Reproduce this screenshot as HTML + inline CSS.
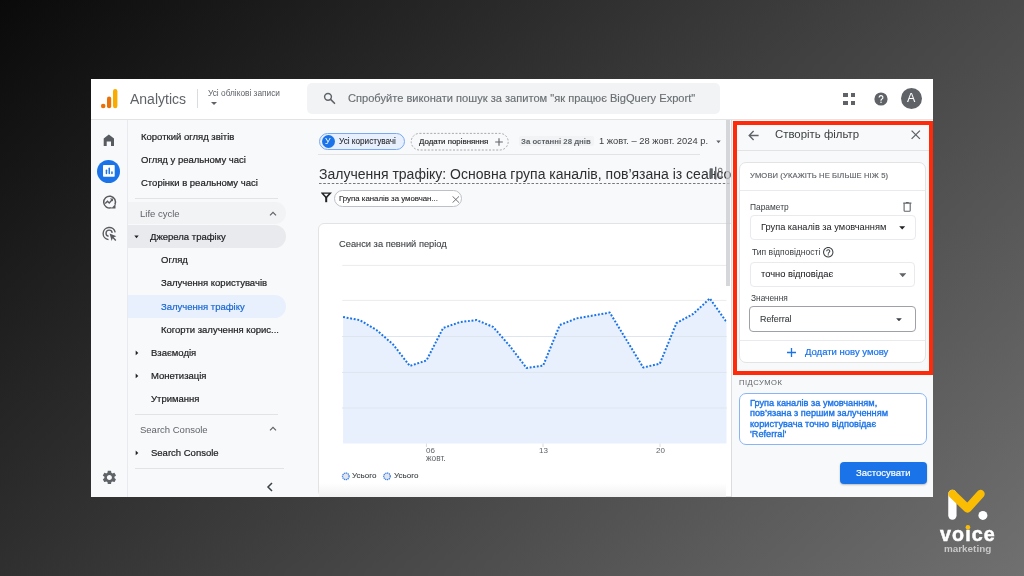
<!DOCTYPE html>
<html><head><meta charset="utf-8"><style>
html,body{margin:0;padding:0;width:1024px;height:576px;overflow:hidden}
body{background:linear-gradient(136.3deg,#0a0a0a 0%,#707070 100%);font-family:"Liberation Sans", sans-serif;position:relative}
.t{position:absolute;line-height:1;white-space:nowrap;will-change:transform}
.r{position:absolute}
</style></head><body>
<div class="r" style="left:91px;top:79px;width:842.00px;height:418.00px;background:#f8f9fa;overflow:hidden"></div>
<div class="r" style="left:91px;top:79px;width:842.00px;height:40.00px;background:#fff"></div>
<div class="r" style="left:91px;top:119px;width:842.00px;height:1.00px;background:#e3e3e3"></div>
<svg class="r" style="left:99px;top:87px" width="22" height="24" viewBox="0 0 22 24"><circle cx="4.2" cy="19" r="2.3" fill="#e8710a"/><rect x="8" y="9.5" width="4.2" height="11.8" rx="2.1" fill="#e8710a"/><rect x="14" y="2" width="4.4" height="19.3" rx="2.2" fill="#f9ab00"/></svg>
<div class="t" style="left:130.00px;top:92.15px;font-size:14px;color:#5f6368;font-weight:400;">Analytics</div>
<div class="r" style="left:197px;top:89px;width:1.00px;height:19.00px;background:#dadce0"></div>
<div class="t" style="left:208.00px;top:88.57px;font-size:8.3px;color:#5f6368;font-weight:400;">Усі облікові записи</div>
<svg class="r" style="left:210px;top:101px" width="8" height="5" viewBox="0 0 8 5"><path d="M1 1h6l-3 3z" fill="#5f6368"/></svg>
<div class="r" style="left:306.7px;top:83.3px;width:413.30px;height:30.70px;background:#f1f3f4;border-radius:5px"></div>
<svg class="r" style="left:318px;top:88px" width="24" height="20" viewBox="0 0 24 20"><circle cx="10" cy="8.8" r="3.4" stroke="#5f6368" stroke-width="1.45" fill="none"/><path d="M12.6 11.4l3.9 3.9" stroke="#5f6368" stroke-width="1.6" stroke-linecap="round"/></svg>
<div class="t" style="left:348.00px;top:92.60px;font-size:11.1px;color:#6a6e72;font-weight:400;-webkit-text-stroke:0.15px #6a6e72;">Спробуйте виконати пошук за запитом "як працює BigQuery Export"</div>
<div class="r" style="left:843.3px;top:93.2px;width:4.30px;height:4.20px;background:#5f6368"></div>
<div class="r" style="left:851px;top:93.2px;width:4.30px;height:4.20px;background:#5f6368"></div>
<div class="r" style="left:843.3px;top:100.5px;width:4.30px;height:4.20px;background:#5f6368"></div>
<div class="r" style="left:851px;top:100.5px;width:4.30px;height:4.20px;background:#5f6368"></div>
<svg class="r" style="left:873.5px;top:91.5px" width="14" height="14" viewBox="0 0 14 14"><circle cx="7" cy="7" r="6.6" fill="#5f6368"/><path d="M5.1 5.4a1.9 1.9 0 1 1 2.6 1.8c-.5.3-.7.6-.7 1.2v.3" stroke="#fff" stroke-width="1.2" fill="none"/><circle cx="7" cy="10.3" r=".75" fill="#fff"/></svg>
<div class="r" style="left:901px;top:88px;width:21.00px;height:21.00px;background:#5f6368;border-radius:50%"></div>
<div class="t" style="left:907.30px;top:92.02px;font-size:12.5px;color:#fff;font-weight:400;">A</div>
<div class="r" style="left:91px;top:120px;width:35.50px;height:377.00px;background:#f8f9fa"></div>
<div class="r" style="left:126.5px;top:120px;width:1.00px;height:377.00px;background:#e8eaed"></div>
<svg class="r" style="left:98px;top:128px" width="22" height="22" viewBox="98 128 22 22"><path d="M103.7 145.9V138.5L108.85 134.6L114 138.5V145.9H111V141.6H106.7V145.9Z" fill="#585b5f"/></svg>
<div class="r" style="left:97.1px;top:159.8px;width:23.10px;height:23.10px;background:#1a73e8;border-radius:50%"></div>
<svg class="r" style="left:103px;top:165px" width="12" height="12" viewBox="0 0 12 12"><rect x="0" y="0" width="11.7" height="11.7" rx="0.8" fill="#fff"/><rect x="2.7" y="4.6" width="1.5" height="4.6" rx="0.75" fill="#1a73e8"/><rect x="5.5" y="2.6" width="1.5" height="6.6" rx="0.75" fill="#1a73e8"/><rect x="8.2" y="6.3" width="1.5" height="2.9" rx="0.75" fill="#1a73e8"/></svg>
<svg class="r" style="left:98px;top:190px" width="22" height="22" viewBox="98 190 22 22"><path d="M114.9 204.6A5.9 5.9 0 1 0 111.6 207.6" stroke="#585b5f" stroke-width="1.5" fill="none"/><path d="M111.2 208.4h4.3v-4.3z" fill="#585b5f"/><path d="M105.2 203.6l2.3-2.3 1.7 1.6 2.7-2.8" stroke="#585b5f" stroke-width="1.4" fill="none"/><path d="M113 198.4v3.2l-3.2-3.2z" fill="#585b5f"/></svg>
<svg class="r" style="left:98px;top:222px" width="22" height="22" viewBox="98 222 22 22"><path d="M115.2 232.3A6.1 6.1 0 1 0 108.5 239.6" stroke="#585b5f" stroke-width="1.4" fill="none"/><path d="M112.2 232.8A3.1 3.1 0 1 0 108.6 236.3" stroke="#585b5f" stroke-width="1.4" fill="none"/><path d="M109.6 233.6l6.8 2.6-2.7 1.1 2.6 2.6-1 1-2.6-2.6-1.1 2.7z" fill="#585b5f"/></svg>
<svg class="r" style="left:100.6px;top:469.2px" width="16.8" height="16.8" viewBox="0 0 24 24"><path d="M19.14 12.94c.04-.3.06-.61.06-.94 0-.32-.02-.64-.07-.94l2.03-1.58a.49.49 0 0 0 .12-.61l-1.92-3.32a.488.488 0 0 0-.59-.22l-2.39.96c-.5-.38-1.03-.7-1.62-.94l-.36-2.54a.484.484 0 0 0-.48-.41h-3.84c-.24 0-.43.17-.47.41l-.36 2.54c-.59.24-1.13.57-1.62.94l-2.39-.96c-.22-.08-.47 0-.59.22L2.74 8.87c-.12.21-.08.47.12.61l2.03 1.58c-.05.3-.09.63-.09.94s.02.64.07.94l-2.03 1.58a.49.49 0 0 0-.12.61l1.92 3.32c.12.22.37.29.59.22l2.39-.96c.5.38 1.03.7 1.62.94l.36 2.54c.05.24.24.41.48.41h3.84c.24 0 .44-.17.47-.41l.36-2.54c.59-.24 1.13-.56 1.62-.94l2.39.96c.22.08.47 0 .59-.22l1.92-3.32c.12-.22.07-.47-.12-.61l-2.01-1.58zM12 15.6c-1.98 0-3.6-1.62-3.6-3.6s1.62-3.6 3.6-3.6 3.6 1.62 3.6 3.6-1.62 3.6-3.6 3.6z" fill="#5f6368"/></svg>
<div class="t" style="left:140.50px;top:131.76px;font-size:9.5px;color:#202124;font-weight:400;-webkit-text-stroke:0.2px #202124;">Короткий огляд звітів</div>
<div class="t" style="left:140.50px;top:154.86px;font-size:9.5px;color:#202124;font-weight:400;-webkit-text-stroke:0.2px #202124;">Огляд у реальному часі</div>
<div class="t" style="left:140.50px;top:178.36px;font-size:9.5px;color:#202124;font-weight:400;-webkit-text-stroke:0.2px #202124;">Сторінки в реальному часі</div>
<div class="r" style="left:135px;top:198px;width:143.00px;height:1.00px;background:#e3e3e3"></div>
<div class="r" style="left:127.5px;top:202.2px;width:158.30px;height:22.10px;background:#f1f3f4;border-radius:0 11px 11px 0"></div>
<div class="t" style="left:140.00px;top:208.86px;font-size:9.5px;color:#5f6368;font-weight:400;">Life cycle</div>
<svg class="r" style="left:268.8px;top:210.5px" width="8" height="5" viewBox="0 0 8 5"><path d="M1 4.3l3-3 3 3" stroke="#5f6368" stroke-width="1.2" fill="none"/></svg>
<div class="r" style="left:127.5px;top:224.8px;width:158.30px;height:23.20px;background:#e8eaed;border-radius:0 11.6px 11.6px 0"></div>
<svg class="r" style="left:134.2px;top:234.8px" width="5" height="4" viewBox="0 0 5 4"><path d="M0.3 0.6h4.4L2.5 3.3z" fill="#202124"/></svg>
<div class="t" style="left:150.40px;top:231.96px;font-size:9.5px;color:#202124;font-weight:400;-webkit-text-stroke:0.2px #202124;">Джерела трафіку</div>
<div class="t" style="left:161.00px;top:255.16px;font-size:9.5px;color:#202124;font-weight:400;-webkit-text-stroke:0.2px #202124;">Огляд</div>
<div class="t" style="left:161.00px;top:278.36px;font-size:9.5px;color:#202124;font-weight:400;-webkit-text-stroke:0.2px #202124;">Залучення користувачів</div>
<div class="r" style="left:127.5px;top:294.8px;width:158.30px;height:23.20px;background:#e8f0fe;border-radius:0 11.6px 11.6px 0"></div>
<div class="t" style="left:161.00px;top:301.66px;font-size:9.5px;color:#1967d2;font-weight:400;-webkit-text-stroke:0.2px #1967d2;">Залучення трафіку</div>
<div class="t" style="left:160.70px;top:324.66px;font-size:9.5px;color:#202124;font-weight:400;-webkit-text-stroke:0.2px #202124;">Когорти залучення корис...</div>
<svg class="r" style="left:134.9px;top:349.6px" width="4" height="6" viewBox="0 0 4 6"><path d="M0.7 0.6v4.6L3.3 2.9z" fill="#202124"/></svg>
<div class="t" style="left:150.70px;top:348.06px;font-size:9.5px;color:#202124;font-weight:400;-webkit-text-stroke:0.2px #202124;">Взаємодія</div>
<svg class="r" style="left:134.9px;top:372.7px" width="4" height="6" viewBox="0 0 4 6"><path d="M0.7 0.6v4.6L3.3 2.9z" fill="#202124"/></svg>
<div class="t" style="left:150.70px;top:371.16px;font-size:9.5px;color:#202124;font-weight:400;-webkit-text-stroke:0.2px #202124;">Монетизація</div>
<div class="t" style="left:150.70px;top:394.26px;font-size:9.5px;color:#202124;font-weight:400;-webkit-text-stroke:0.2px #202124;">Утримання</div>
<div class="r" style="left:135px;top:414px;width:143.00px;height:1.00px;background:#e3e3e3"></div>
<div class="t" style="left:139.80px;top:424.76px;font-size:9.5px;color:#5f6368;font-weight:400;">Search Console</div>
<svg class="r" style="left:268.8px;top:426.4px" width="8" height="5" viewBox="0 0 8 5"><path d="M1 4.3l3-3 3 3" stroke="#5f6368" stroke-width="1.2" fill="none"/></svg>
<svg class="r" style="left:134.9px;top:449.8px" width="4" height="6" viewBox="0 0 4 6"><path d="M0.7 0.6v4.6L3.3 2.9z" fill="#202124"/></svg>
<div class="t" style="left:150.70px;top:448.26px;font-size:9.5px;color:#202124;font-weight:400;-webkit-text-stroke:0.2px #202124;">Search Console</div>
<div class="r" style="left:135px;top:468px;width:149.00px;height:1.00px;background:#e3e3e3"></div>
<svg class="r" style="left:265.5px;top:481.5px" width="8" height="10" viewBox="0 0 8 10"><path d="M6 1L2 5l4 4" stroke="#3c4043" stroke-width="1.5" fill="none"/></svg>
<div class="r" style="left:318.5px;top:132.9px;width:86.70px;height:17.60px;background:#e8f0fe;border:1.3px solid #79a8f4;border-radius:9px;box-sizing:border-box"></div>
<div class="r" style="left:321.7px;top:135px;width:13.00px;height:13.00px;background:#1a73e8;border-radius:50%"></div>
<div class="t" style="left:325.20px;top:137.45px;font-size:8.8px;color:#fff;font-weight:400;">У</div>
<div class="t" style="left:339.40px;top:137.66px;font-size:8.2px;color:#202124;font-weight:400;-webkit-text-stroke:0.05px #202124;">Усі користувачі</div>
<svg class="r" style="left:410px;top:132px" width="100" height="20" viewBox="0 0 100 20"><rect x="1.2" y="1.4" width="97" height="16.6" rx="8.3" fill="none" stroke="#9da1a6" stroke-width="0.9" stroke-dasharray="2 1.6"/></svg>
<div class="t" style="left:419.10px;top:137.91px;font-size:7.9px;color:#202124;font-weight:400;-webkit-text-stroke:0.15px #202124;">Додати порівняння</div>
<svg class="r" style="left:494.5px;top:137.5px" width="8" height="8" viewBox="0 0 8 8"><path d="M4 0.2v7.6M0.2 4h7.6" stroke="#5f6368" stroke-width="1.1"/></svg>
<div class="r" style="left:519px;top:136.2px;width:74.80px;height:10.10px;background:#f1f3f4;border-radius:2px"></div>
<div class="t" style="left:521.20px;top:137.60px;font-size:7.8px;color:#5f6368;font-weight:700;">За останні 28 днів</div>
<div class="t" style="left:598.50px;top:137.48px;font-size:9.35px;color:#3c4043;font-weight:400;">1 жовт. – 28 жовт. 2024 р.</div>
<svg class="r" style="left:716.3px;top:140px" width="5" height="4" viewBox="0 0 5 4"><path d="M0.3 0.6h4.4L2.5 3.3z" fill="#5f6368"/></svg>
<div class="r" style="left:318px;top:153.8px;width:382.00px;height:1.00px;background:#e3e3e3"></div>
<div class="r" style="left:318px;top:160px;width:412.5px;height:30px;overflow:hidden">
<div class="t" style="left:0.90px;top:7.15px;font-size:14px;color:#2d2f31;font-weight:400;">Залучення трафіку: Основна група каналів, пов’язана із сеансом</div>
<div class="r" style="left:0.9px;top:22.8px;width:420px;height:1.3px;background-image:linear-gradient(90deg,#75797e 62%,transparent 62%);background-size:4.25px 1.3px"></div>
<svg class="r" style="left:390px;top:5px" width="16" height="16" viewBox="0 0 16 16"><rect x="1.6" y="3.3" width="3.2" height="10.4" rx="0.8" fill="#5f6368"/><rect x="7" y="1.8" width="1.4" height="12.7" fill="#5f6368"/><rect x="10.6" y="3.3" width="3.2" height="8.8" rx="0.8" fill="none" stroke="#5f6368" stroke-width="0.9"/></svg>
</div>
<svg class="r" style="left:321px;top:191.5px" width="11" height="11" viewBox="0 0 11 11"><path d="M1 1.1h8.4L5.2 5.6z" fill="none" stroke="#202124" stroke-width="1.4" stroke-linejoin="miter"/><rect x="4.2" y="5" width="2" height="5.2" fill="#202124"/></svg>
<div class="r" style="left:334.1px;top:189.7px;width:128.40px;height:17.60px;background:#fff;border:1px solid #bdc1c6;border-radius:9px;box-sizing:border-box"></div>
<div class="t" style="left:339.40px;top:195.35px;font-size:7.85px;color:#202124;font-weight:400;-webkit-text-stroke:0.1px #202124;">Група каналів за умовчан...</div>
<svg class="r" style="left:451.5px;top:195.8px" width="7.5" height="7" viewBox="0 0 7.5 7"><path d="M0.5 0.3l6.6 6.4M7.1 0.3L0.5 6.7" stroke="#5f6368" stroke-width="0.9"/></svg>
<div class="r" style="left:318.3px;top:222.9px;width:440px;height:274.1px;border-bottom:none;border-radius:6px 6px 0 0;background:#fff;border:1px solid #e3e3e3;border-radius:6px;box-sizing:border-box"></div>
<div class="t" style="left:339.20px;top:240.43px;font-size:9.3px;color:#3c4043;font-weight:400;-webkit-text-stroke:0.1px #3c4043;">Сеанси за певний період</div>
<svg class="r" style="left:0;top:0" width="1024" height="576" viewBox="0 0 1024 576"><defs><clipPath id="cc"><rect x="318" y="222" width="408.5" height="275"/></clipPath><pattern id="dp" width="4" height="4" patternUnits="userSpaceOnUse"><rect width="4" height="4" fill="#e8f0fe"/><circle cx="2" cy="2" r="0.5" fill="#d2e3fc"/></pattern></defs><g clip-path="url(#cc)"><rect x="342.3" y="264.9" width="400" height="1" fill="#ebebeb"/><rect x="342.3" y="299.9" width="400" height="1" fill="#ebebeb"/><rect x="342.3" y="336.0" width="400" height="1" fill="#ebebeb"/><rect x="342.3" y="371.9" width="400" height="1" fill="#ebebeb"/><rect x="342.3" y="407.5" width="400" height="1" fill="#ebebeb"/><path d="M343.1 317.0 L359.8 320.1 L376.4 329.9 L393.1 344.4 L409.8 366.0 L426.5 360.4 L443.1 328.0 L459.8 322.2 L476.5 320.0 L493.1 326.9 L509.8 346.0 L526.5 368.0 L543.1 365.7 L559.8 325.0 L576.5 318.4 L593.2 315.5 L609.8 312.6 L626.5 340.0 L643.2 367.5 L659.8 363.7 L676.5 323.0 L693.2 314.0 L709.8 298.4 L726.5 322.0 L743.2 330.0 L759.9 330.0 L759.9 443.5 L343.1 443.5 Z" fill="#e8f0fe"/><rect x="342.3" y="336.0" width="400" height="1" fill="#dfe5ee"/><rect x="342.3" y="371.9" width="400" height="1" fill="#dfe5ee"/><rect x="342.3" y="407.5" width="400" height="1" fill="#dfe5ee"/><path d="M343.1 317.0 L359.8 320.1 L376.4 329.9 L393.1 344.4 L409.8 366.0 L426.5 360.4 L443.1 328.0 L459.8 322.2 L476.5 320.0 L493.1 326.9 L509.8 346.0 L526.5 368.0 L543.1 365.7 L559.8 325.0 L576.5 318.4 L593.2 315.5 L609.8 312.6 L626.5 340.0 L643.2 367.5 L659.8 363.7 L676.5 323.0 L693.2 314.0 L709.8 298.4 L726.5 322.0 L743.2 330.0 L759.9 330.0" fill="none" stroke="#1a73e8" stroke-width="2" stroke-dasharray="1.9 1.7" stroke-linejoin="round"/><rect x="425.9" y="443.5" width="1" height="3.5" fill="#dadce0"/><rect x="542.5" y="443.5" width="1" height="3.5" fill="#dadce0"/><rect x="659.5" y="443.5" width="1" height="3.5" fill="#dadce0"/></g><circle cx="345.8" cy="476.3" r="3.3" fill="#e3e5e8" stroke="#3b82f0" stroke-width="1.3" stroke-dasharray="1.3 0.6"/><circle cx="387" cy="476.3" r="3.3" fill="#e3e5e8" stroke="#3b82f0" stroke-width="1.3" stroke-dasharray="1.3 0.6"/></svg>
<div class="t" style="left:426.40px;top:447.43px;font-size:8px;color:#5f6368;font-weight:400;">06</div>
<div class="t" style="left:426.30px;top:454.47px;font-size:8.3px;color:#5f6368;font-weight:400;">жовт.</div>
<div class="t" style="left:538.60px;top:447.43px;font-size:8px;color:#5f6368;font-weight:400;">13</div>
<div class="t" style="left:655.70px;top:447.43px;font-size:8px;color:#5f6368;font-weight:400;">20</div>
<div class="t" style="left:352.40px;top:472.13px;font-size:8px;color:#3c4043;font-weight:400;-webkit-text-stroke:0.1px #3c4043;">Усього</div>
<div class="t" style="left:393.60px;top:472.13px;font-size:8px;color:#3c4043;font-weight:400;-webkit-text-stroke:0.1px #3c4043;">Усього</div>
<div class="r" style="left:319.3px;top:483px;width:407.00px;height:14.00px;background:linear-gradient(#fff,#f1f1f1)"></div>
<div class="r" style="left:726.3px;top:120px;width:4.20px;height:166.00px;background:rgba(200,202,205,0.75)"></div>
<div class="r" style="left:730.5px;top:120px;width:202.50px;height:377.00px;background:#f8f9fa;border-left:1px solid #dadce0;box-sizing:border-box"></div>
<svg class="r" style="left:747.5px;top:129.5px" width="11" height="11" viewBox="0 0 11 11"><path d="M10.6 5.5H1.4M5.6 1.1L1.2 5.5l4.4 4.4" stroke="#5f6368" stroke-width="1.35" fill="none"/></svg>
<div class="t" style="left:775.30px;top:129.45px;font-size:11.4px;color:#3c4043;font-weight:400;">Створіть фільтр</div>
<svg class="r" style="left:911px;top:130.3px" width="9.5" height="9.5" viewBox="0 0 9.5 9.5"><path d="M0.6 0.6l8.3 8.3M8.9 0.6L0.6 8.9" stroke="#5f6368" stroke-width="1.3"/></svg>
<div class="r" style="left:737px;top:150.3px;width:192.00px;height:1.00px;background:#e3e3e3"></div>
<div class="r" style="left:738.8px;top:162px;width:187.20px;height:201.20px;background:#fff;border:1px solid #e3e3e3;border-radius:7px;box-sizing:border-box"></div>
<div class="t" style="left:749.80px;top:172.47px;font-size:7.6px;color:#5f6368;font-weight:400;letter-spacing:0.11px;-webkit-text-stroke:0.15px #5f6368;">УМОВИ (УКАЖІТЬ НЕ БІЛЬШЕ НІЖ 5)</div>
<div class="r" style="left:739.8px;top:190px;width:185.20px;height:1.00px;background:#e8eaed"></div>
<div class="t" style="left:749.90px;top:203.19px;font-size:8.4px;color:#3c4043;font-weight:400;">Параметр</div>
<svg class="r" style="left:903px;top:202px" width="9" height="10" viewBox="0 0 9 10"><path d="M0.3 1.1h8.1M3 0.5h2.7" stroke="#5f6368" stroke-width="1.1" fill="none"/><path d="M1.1 1.2v7.3a.8.8 0 0 0 .8.8h4.5a.8.8 0 0 0 .8-.8V1.2" stroke="#5f6368" stroke-width="1.1" fill="none"/></svg>
<div class="r" style="left:749.8px;top:215.3px;width:165.90px;height:25.20px;border:1px solid #e8eaed;border-radius:4px;box-sizing:border-box"></div>
<div class="t" style="left:760.70px;top:223.48px;font-size:9.24px;color:#202124;font-weight:400;">Група каналів за умовчанням</div>
<svg class="r" style="left:899.4px;top:226.4px" width="6.5" height="4" viewBox="0 0 6.5 4"><path d="M0.2 0.2h6L3.2 3.5z" fill="#202124"/></svg>
<div class="t" style="left:751.60px;top:247.76px;font-size:8.55px;color:#3c4043;font-weight:400;">Тип відповідності</div>
<svg class="r" style="left:821.5px;top:245.8px" width="12.5" height="12.5" viewBox="0 0 24 24"><path d="M11 18h2v-2h-2v2zm1-16C6.48 2 2 6.48 2 12s4.48 10 10 10 10-4.48 10-10S17.52 2 12 2zm0 18c-4.41 0-8-3.59-8-8s3.59-8 8-8 8 3.59 8 8-3.59 8-8 8zm0-14c-2.21 0-4 1.79-4 4h2c0-1.1.9-2 2-2s2 .9 2 2c0 2-3 1.75-3 5h2c0-2.25 3-2.5 3-5 0-2.21-1.79-4-4-4z" fill="#3c4043"/></svg>
<div class="r" style="left:749.8px;top:261.7px;width:165.40px;height:25.50px;border:1px solid #e8eaed;border-radius:4px;box-sizing:border-box"></div>
<div class="t" style="left:760.60px;top:269.78px;font-size:9.35px;color:#202124;font-weight:400;-webkit-text-stroke:0.05px #202124;">точно відповідає</div>
<svg class="r" style="left:898.5px;top:272.7px" width="7.5" height="4.5" viewBox="0 0 7.5 4.5"><path d="M0.2 0.2h7L3.7 4.2z" fill="#5f6368"/></svg>
<div class="t" style="left:751.00px;top:293.53px;font-size:8.35px;color:#3c4043;font-weight:400;">Значення</div>
<div class="r" style="left:749.2px;top:305.6px;width:166.50px;height:26.80px;border:1px solid #9ea2a7;border-radius:4px;box-sizing:border-box"></div>
<div class="t" style="left:760.10px;top:314.66px;font-size:8.9px;color:#3c4043;font-weight:400;-webkit-text-stroke:0.1px #3c4043;">Referral</div>
<svg class="r" style="left:896.4px;top:317.6px" width="6" height="3.5" viewBox="0 0 6 3.5"><path d="M0.1 0.2h5.7L3 3.3z" fill="#3c4043"/></svg>
<div class="r" style="left:739.8px;top:339.5px;width:185.20px;height:1.00px;background:#e8eaed"></div>
<svg class="r" style="left:787px;top:347.7px" width="9" height="9" viewBox="0 0 9 9"><path d="M4.5 0v9M0 4.5h9" stroke="#1a73e8" stroke-width="1.3"/></svg>
<div class="t" style="left:804.80px;top:347.26px;font-size:9.5px;color:#1a73e8;font-weight:400;-webkit-text-stroke:0.2px #1a73e8;">Додати нову умову</div>
<div class="r" style="left:733px;top:120.5px;width:200.00px;height:254.30px;border:4.3px solid #ff2a0a;box-sizing:border-box"></div>
<div class="t" style="left:739.00px;top:378.57px;font-size:7.6px;color:#5f6368;font-weight:400;letter-spacing:0.5px">ПІДСУМОК</div>
<div class="r" style="left:738.5px;top:392.9px;width:188.30px;height:52.60px;background:#fff;border:1px solid #8ab4f8;border-radius:7px;box-sizing:border-box"></div>
<div class="t" style="left:750.00px;top:398.91px;font-size:9.2px;color:#1a73e8;font-weight:400;-webkit-text-stroke:0.2px #1a73e8;-webkit-text-stroke:0.35px #1a73e8;">Група каналів за умовчанням,</div>
<div class="t" style="left:750.00px;top:409.31px;font-size:9.2px;color:#1a73e8;font-weight:400;-webkit-text-stroke:0.2px #1a73e8;-webkit-text-stroke:0.35px #1a73e8;">пов’язана з першим залученням</div>
<div class="t" style="left:750.00px;top:419.71px;font-size:9.2px;color:#1a73e8;font-weight:400;-webkit-text-stroke:0.2px #1a73e8;-webkit-text-stroke:0.35px #1a73e8;">користувача точно відповідає</div>
<div class="t" style="left:750.00px;top:430.11px;font-size:9.2px;color:#1a73e8;font-weight:400;-webkit-text-stroke:0.2px #1a73e8;-webkit-text-stroke:0.35px #1a73e8;">'Referral'</div>
<div class="r" style="left:840.4px;top:461.8px;width:87.00px;height:22.60px;background:#1a73e8;border-radius:4px;box-shadow:0 1px 2px rgba(0,0,0,.25)"></div>
<div class="t" style="left:856.30px;top:468.36px;font-size:9.5px;color:#fff;font-weight:400;-webkit-text-stroke:0.2px #fff;">Застосувати</div>
<svg class="r" style="left:930px;top:480px" width="80" height="80" viewBox="930 480 80 80"><path d="M952.4 494v21.5" stroke="#fff" stroke-width="8.3" stroke-linecap="round"/><path d="M952.4 494L967.5 508.5L980.6 494" stroke="#fbbc04" stroke-width="8.3" stroke-linecap="round" stroke-linejoin="round" fill="none"/><circle cx="982.9" cy="515.4" r="4.5" fill="#fff"/><circle cx="967.9" cy="527.2" r="2.3" fill="#fbbc04"/></svg>
<div class="t" style="left:939.90px;top:525.12px;font-size:19.7px;color:#fff;font-weight:700;letter-spacing:1.1px;-webkit-text-stroke:0.5px #fff;">voıce</div>
<div class="t" style="left:944.00px;top:543.82px;font-size:9.9px;color:#c8c8c8;font-weight:700;">marketing</div>
</body></html>
